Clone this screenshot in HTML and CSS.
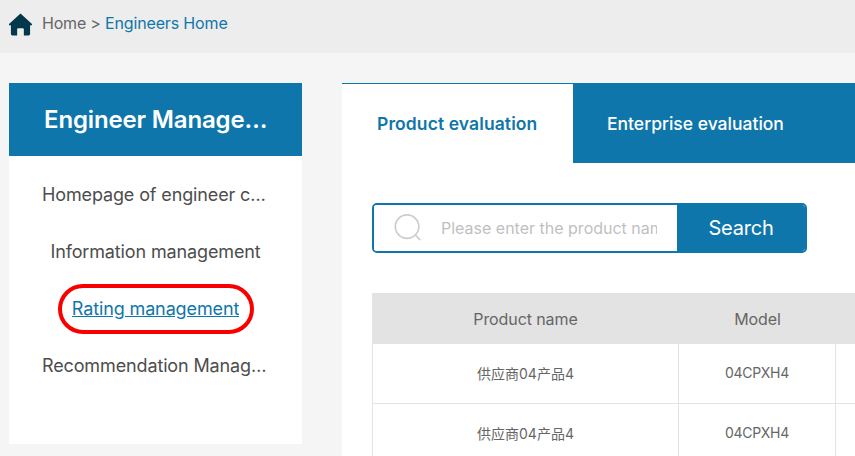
FILE: index.html
```html
<!DOCTYPE html>
<html lang="en">
<head>
<meta charset="utf-8">
<title>Engineers Home</title>
<link rel="stylesheet" href="styles.css">
</head>
<body>
<header class="crumbs">
  <svg class="home" viewBox="0 0 24 24" aria-hidden="true"><path d="M12 0.5 L24 11.6 L24 12.8 L22 12.8 L22 22 Q22 23.5 20.5 23.5 L15.5 23.5 L15.5 17 Q15.5 16 14.5 16 L9.5 16 Q8.5 16 8.5 17 L8.5 23.5 L3.5 23.5 Q2 23.5 2 22 L2 12.8 L0 12.8 L0 11.6 Z"/></svg>
  <span class="crumb">Home &gt; </span><a class="crumb-link">Engineers Home</a>
</header>
<div class="page">
  <aside class="side">
    <h2 class="side-title"><span class="ell">Engineer Management</span></h2>
    <nav class="side-nav">
      <div class="side-item"><span class="ell">Homepage of engineer center</span></div>
      <div class="side-item"><span class="ell">Information management</span></div>
      <div class="side-item current"><a class="ell">Rating management</a><span class="ring"></span></div>
      <div class="side-item"><span class="ell">Recommendation Management</span></div>
    </nav>
  </aside>
  <main class="main">
    <div class="tabs">
      <div class="tab active">Product evaluation</div>
      <div class="tab">Enterprise evaluation</div>
    </div>
    <div class="search">
      <div class="search-field">
        <svg class="glass" viewBox="0 0 30 30" aria-hidden="true"><circle cx="14" cy="13.5" r="12.6"/><path d="M23.5 23 L28 28"/></svg>
        <input class="search-input" type="text" placeholder="Please enter the product name">
      </div>
      <button class="search-btn" type="button">Search</button>
    </div>
    <table class="grid">
      <thead>
        <tr><th class="c1">Product name</th><th class="c2">Model</th><th class="c3"></th></tr>
      </thead>
      <tbody>
        <tr><td>供应商04产品4</td><td class="code">04CPXH4</td><td></td></tr>
        <tr><td>供应商04产品4</td><td class="code">04CPXH4</td><td></td></tr>
      </tbody>
    </table>
  </main>
</div>
</body>
</html>
```
FILE: styles.css
```css
* { box-sizing: border-box; }
html, body { margin: 0; height: 456px; overflow: hidden; }
body { background: #f5f5f5; font-family: Inter, "Noto Sans CJK SC", sans-serif; color: #4d4d4d; }
.crumbs { height: 53px; background: #ededed; display: flex; align-items: center; padding: 0 9px 8px; font-size: 16px; letter-spacing: -0.2px; color: #666; white-space: pre; }
.home { width: 23px; height: 23px; fill: #03374b; margin: 3px 10px 0 0; flex: none; }
.crumb-link { color: #0f76ab; letter-spacing: -0.15px; }
.page { display: flex; padding: 30px 0 0 9px; width: 855px; }
.side { width: 293px; height: 361px; background: #fff; flex: none; }
.side-title { margin: 0; height: 73px; background: #0f76ab; color: #fff; font-size: 24px; font-weight: 600; letter-spacing: -0.15px; display: flex; align-items: center; justify-content: center; padding: 0 33px 0 35px; }
.ell { display: block; overflow: hidden; white-space: nowrap; text-overflow: ellipsis; max-width: 100%; }
.side-nav { padding-top: 10px; }
.side-item { height: 57px; display: flex; align-items: center; justify-content: center; padding: 0 33px; font-size: 18px; letter-spacing: -0.13px; color: #4d4d4d; position: relative; }
.current a { color: #0f76ab; text-decoration: underline; }
.ring { position: absolute; left: 49px; top: 4px; width: 196px; height: 50px; border: 4px solid #f90000; border-radius: 25px; }
.main { margin-left: 40px; width: 513px; height: 373px; background: #fff; border-top: 1px solid #0f76ab; flex: none; overflow: hidden; }
.tabs { display: flex; height: 79px; }
.tab { font-size: 17.5px; display: flex; align-items: center; background: #0f76ab; color: #fff; flex: 1; padding-left: 34px; font-weight: 500; }
.tab.active { flex: none; width: 231px; background: #fff; color: #0f76ab; font-weight: 600; padding-left: 35px; letter-spacing: 0.1px; }
.search { display: flex; width: 435px; height: 50px; margin: 40px 0 0 30px; border-radius: 5px; overflow: hidden; border: 2px solid #0f76ab; }
.search-field { width: 303px; display: flex; align-items: center; padding-left: 20px; background: #fff; flex: none; }
.glass { width: 28px; height: 28px; fill: none; stroke: #ccc; stroke-width: 1.8; flex: none; margin-right: 19px; }
.search-input { border: 0; outline: 0; padding: 0; width: 216px; font: 16px Inter, sans-serif; color: #4d4d4d; background: transparent; }
.search-input::placeholder { color: #bfbfbf; opacity: 1; }
.search-btn { flex: 1; border: 0; padding: 0; background: #0f76ab; color: #fff; font: 20px Inter, sans-serif; letter-spacing: -0.2px; }
.grid { border-collapse: separate; border-spacing: 0; table-layout: fixed; width: 600px; margin: 40px 0 0 30px; }
.c1 { width: 307px; }
.c2 { width: 157px; }
.c3 { width: 136px; }
.grid th { height: 51px; background: #e3e3e3; font-size: 16px; letter-spacing: -0.1px; font-weight: 400; color: #666; }
.grid td { height: 60px; border-bottom: 1px solid #e3e3e3; border-right: 1px solid #e3e3e3; text-align: center; font-size: 14px; color: #666; padding: 0 0 2px; }
.grid td:first-child { border-left: 1px solid #e3e3e3; }
.grid td.code { letter-spacing: -0.3px; }
```
